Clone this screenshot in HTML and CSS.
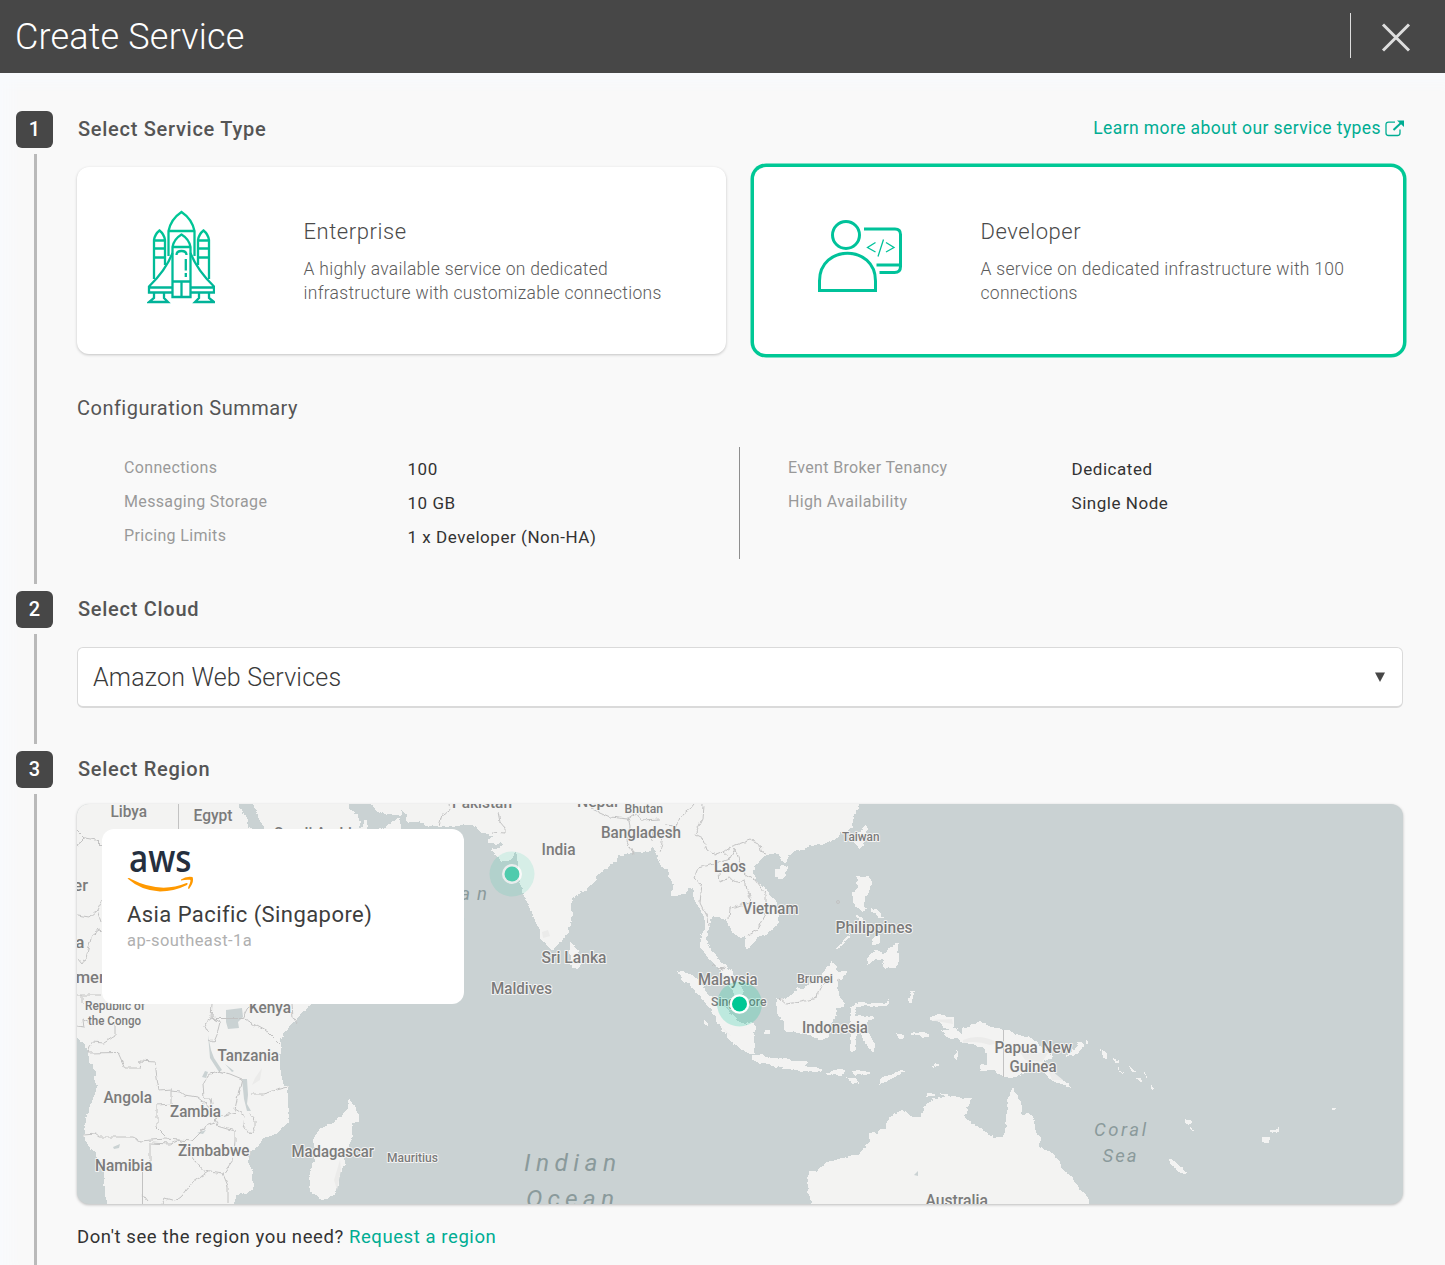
FILE: index.html
```html
<!DOCTYPE html>
<html lang="en">
<head>
<meta charset="utf-8">
<title>Create Service</title>
<link rel="stylesheet" href="styles.css">
</head>
<body>
<header class="topbar">
  <h1 class="title">Create Service</h1>
  <button class="close" aria-label="Close">
    <svg width="30" height="30" viewBox="0 0 30 30"><path d="M2 1.500 28 27.500M28 1.500 2 27.500" stroke="#dedede" stroke-width="3" fill="none"/></svg>
  </button>
</header>
<main class="steps">
  <section class="step step-type">
    <div class="rail"><span class="badge">1</span><i class="line"></i></div>
    <div class="body">
      <div class="head">
        <h2>Select Service Type</h2>
        <a class="learn" href="#"><span>Learn more about our service types</span>
          <svg width="19" height="17" viewBox="0 0 19 17" fill="none" stroke="#00ad93"><path d="M10 2.200H3.500Q1 2.200 1 4.700V13Q1 15.500 3.500 15.500H12.500Q15 15.500 15 13V9.500" stroke-width="1.300"/><path d="M8.500 10 16.500 2.500" stroke-width="2"/><path d="M12 .5H19V7Z" fill="#00ad93" stroke="none"/></svg>
        </a>
      </div>
      <div class="cards">
        <article class="card">
          <div class="art">
            <svg width="68" height="94" viewBox="147 210 68 94" fill="none" stroke="url(#g)" stroke-width="2.300">
              <defs><linearGradient id="g" gradientUnits="userSpaceOnUse" x1="0" y1="210" x2="0" y2="304"><stop offset="0" stop-color="#00c895"/><stop offset="1" stop-color="#00b299"/></linearGradient></defs>
              <path d="M168.500 256V231Q171 219 181.500 212Q192 219 194.500 231V256M168.500 231H194.500"/>
              <path d="M172.500 297V247Q174 239 181.500 234.500Q189 239 190.500 247V297ZM172.500 247H190.500M172.500 281.500H190.500M181.500 281.500V297"/>
              <path d="M154 279V240Q155 234 159.500 230.500Q164 234 165 240V265M154 240.500H165M154 248.500H165M154 257.500H165"/>
              <path d="M209 279V240Q208 234 203.500 230.500Q199 234 198 240V265M198 240.500H209M198 248.500H209M198 257.500H209"/>
              <path d="M172.500 253Q166 270 149 286.500V292.500H172.500M149 287.500H172.500M190.500 253Q197 270 214 286.500V292.500H190.500M214 287.500H190.500"/>
              <path d="M154 293V298L149 302H168L164 298V293M199 293V298L195 302H214L209 298V293"/>
              <path d="M176.500 255Q176.500 251 181.500 251Q186.500 251 186.500 255M185.800 259V270.500M185.800 273V277"/>
            </svg>
          </div>
          <div class="copy"><h3>Enterprise</h3><p>A highly available service on dedicated<br>infrastructure with customizable connections</p></div>
        </article>
        <article class="card selected">
          <div class="art">
            <svg width="86" height="74" viewBox="817 219 86 74" fill="none" stroke="#00c29a" stroke-width="3">
              <circle cx="846" cy="235" r="13.500"/>
              <path d="M819.500 290.500V281C819.500 244 875.500 244 875.500 281V290.500Z"/>
              <path d="M864 229H895Q900.500 229 900.500 234.500V266.500Q900.500 272.500 894.500 272.500H879.500M876.500 265H900"/>
              <path d="M875.500 242.500 867.500 247.500 875.500 252M886 242.500 894 247.500 886 252M883.500 239.500 878 256.500" stroke-width="1.300"/>
            </svg>
          </div>
          <div class="copy"><h3>Developer</h3><p>A service on dedicated infrastructure with 100<br>connections</p></div>
        </article>
      </div>
      <h3 class="summary-title">Configuration Summary</h3>
      <div class="summary">
        <dl>
          <dt>Connections</dt><dd>100</dd>
          <dt>Messaging Storage</dt><dd>10 GB</dd>
          <dt>Pricing Limits</dt><dd>1 x Developer (Non-HA)</dd>
        </dl>
        <dl>
          <dt>Event Broker Tenancy</dt><dd>Dedicated</dd>
          <dt>High Availability</dt><dd>Single Node</dd>
        </dl>
      </div>
    </div>
  </section>
  <section class="step step-cloud">
    <div class="rail"><span class="badge">2</span><i class="line"></i></div>
    <div class="body">
      <div class="head"><h2>Select Cloud</h2></div>
      <div class="select"><span>Amazon Web Services</span><svg width="10" height="10" viewBox="0 0 10 10"><path d="M0 .5H10L5 10Z" fill="#474747"/></svg></div>
    </div>
  </section>
  <section class="step step-region">
    <div class="rail"><span class="badge">3</span><i class="line"></i></div>
    <div class="body">
      <div class="head"><h2>Select Region</h2></div>
      <div class="map">
        <svg class="world" width="1326" height="400" viewBox="77 804 1326 400">
          <defs><filter id="coast" filterUnits="userSpaceOnUse" x="67" y="794" width="1346" height="420"><feTurbulence type="fractalNoise" baseFrequency=".16" numOctaves="2" seed="4" result="n"/><feDisplacementMap in="SourceGraphic" in2="n" scale="5" xChannelSelector="R" yChannelSelector="G"/></filter></defs>
          <g class="land" shape-rendering="crispEdges" filter="url(#coast)">
            <path d="M67 794H235L242 811 248 825 256 840 320 980 312 1004 302 1013 292 1022 287 1030 283 1034 280 1042 281 1050 279 1058 279 1070 283 1082 288 1087 287 1100 289 1113 287 1123 277 1133 263 1138 256 1147 250 1152 247 1158 248 1163 253 1173 252 1181 253 1188 246 1192 237 1195 232 1204V1214H107V1204L105 1187 103 1167 98 1157 93 1150 86 1141 84 1133 86 1124 87 1117 93 1100 98 1088 96 1080 95 1070 90 1062 89 1054 86 1045 77 1037 67 1030Z"/>
            <path d="M249 794H342L347 804 352 811 358 815 360 826 363 827 363 821 366 820 367 829 382 829 391 824 399 818 402 829 410 840 300 980 265 829 253 804Z"/>
            <path d="M360 794H864L859 804 855 813 852 820 851 828 846 831 840 833 836 839 827 843 817 844 807 848 797 851 788 855 786 862 783 862 780 854 767 853 761 859 757 862 754 868 752 872 755 880 760 885 769 893 775 900 777 908 777 917 776 925 773 928 764 934 758 937 753 943 747 948 745 937 737 935 733 933 730 926 727 920 720 918 718 915 712 915 709 927 706 940 709 946 712 953 717 958 722 963 728 968 732 973 740 983 744 999 737 997 730 987 725 976 718 967 708 957 702 948 700 940 703 931 706 923 702 910 697 905 695 897 692 887 688 890 682 895 678 896 672 895 674 888 672 880 667 870 661 865 657 855 653 847 650 850 640 852 630 853 618 855 616 861 611 864 607 868 599 874 594 881 587 888 578 894 571 900 572 909 571 917 568 933 562 940 552 950 549 947 545 943 541 938 540 929 533 917 529 905 523 893 520 880 518 860 516 848 512 858 505 860 500 860 492 849 500 848 504 842 488 842 488 839 495 836 482 833 477 828 472 824 437 827 420 823 408 822 406 815 402 810 400 815 383 813 375 808Z"/>
            <path d="M571 942 578 952 582 963 578 967 573 968 570 960ZM349 1099 354 1105 357 1114 358 1122 353 1123 351 1137 345 1157 340 1176 335 1193 328 1198 322 1199 312 1193 309 1173 315 1161 316 1152 314 1142 316 1133 323 1128 333 1123 342 1115 347 1110Z"/>
            <path d="M775 871 780 867 788 866 787 872 782 878 775 876ZM867 826 860 832 855 842 859 848 864 842ZM858 877 870 878 870 886 868 893 863 900 863 906 866 909 863 912 858 907 853 903 853 895 857 889ZM870 953 876 950 883 955 889 949 897 943 899 960 895 968 885 967 883 959 873 960 868 964ZM836 949 850 935 850 937 839 948ZM871 908 877 911 883 918 878 917ZM873 939 878 934 880 942 874 945ZM857 915 863 919 861 923Z"/>
            <path d="M777 998 780 1000 790 997 799 989 812 984 820 976 827 969 832 962 838 972 847 973 837 982 839 995 845 1005 837 1007 835 1017 829 1026 828 1037 820 1040 812 1036 807 1033 785 1031 784 1021 778 1015Z"/>
            <path d="M678 972 685 973 695 977 701 983 708 995 718 1003 727 1010 739 1021 750 1028 753 1035 753 1052 745 1052 739 1046 730 1040 723 1031 715 1017 708 1005 700 997 692 986 683 980ZM753 1055 760 1055 768 1057 775 1060 788 1058 793 1061 808 1062 804 1065 812 1067 822 1070 813 1072 800 1070 782 1068 767 1064 752 1060Z"/>
            <path d="M826 1072H830V1074H826ZM831 1072 838 1069 846 1072 842 1074 832 1074ZM853 1072 862 1071 870 1073 855 1075ZM847 1078 855 1079 859 1083 852 1082ZM880 1084 881 1078 890 1075 905 1071 892 1078ZM897 1034 904 1035 903 1037 898 1037ZM911 1034 923 1032 929 1035 928 1038 918 1035ZM908 1001 911 993 914 992 911 1002ZM765 1030H769V1032H765ZM747 1024 753 1022 756 1028 754 1032ZM926 1093 936 1093 934 1096 927 1096ZM704 1020 707 1023 706 1025Z"/>
            <path d="M888 1001 887 1005 877 1006 864 1005 857 1007 853 1016 872 1016 874 1018 864 1023 864 1029 872 1038 875 1045 873 1051 865 1044 861 1032 858 1027 855 1031 856 1048 854 1051 850 1050 852 1037 849 1030 851 1016 852 1007 857 1003 878 1004 884 1003Z"/>
            <path d="M930 1018 942 1014 947 1017 953 1017 954 1027 960 1035 963 1029 967 1028 972 1025 980 1022 990 1027 1003 1030 1010 1032 1018 1036 1030 1038 1043 1048 1052 1057 1043 1060 1047 1068 1057 1077 1065 1081 1070 1087 1053 1082 1042 1070 1030 1069 1020 1073 1017 1077 1003 1076 995 1070 980 1070 982 1066 987 1065 988 1055 982 1047 974 1044 963 1042 956 1037 948 1038 942 1030 952 1031 940 1023ZM1066 1055 1075 1050 1080 1042 1084 1044 1078 1053 1067 1056ZM1086 1040 1088 1041 1087 1044ZM1101 1051 1107 1056 1106 1059 1102 1055ZM1113 1059 1119 1061 1118 1063ZM1118 1068 1124 1073ZM1129 1066 1135 1071 1133 1071ZM1136 1078 1142 1079 1141 1081ZM1144 1072 1147 1077ZM1150 1085 1153 1088 1150 1087Z"/>
            <path d="M813 1214V1204L808 1190 808 1181 811 1172 817 1173 820 1168 827 1163 840 1159 857 1155 866 1148 870 1142 870 1134 874 1132 878 1135 880 1130 885 1129 887 1121 893 1115 903 1110 908 1114 912 1118 922 1117 924 1109 928 1103 933 1100 945 1098 941 1094 948 1095 959 1098 972 1098 970 1103 966 1108 967 1113 963 1117 971 1123 980 1128 988 1135 995 1138 1003 1137 1006 1129 1007 1115 1008 1100 1013 1089 1017 1094 1020 1105 1022 1114 1028 1115 1033 1119 1035 1130 1039 1137 1040 1147 1047 1151 1053 1155 1058 1160 1061 1168 1065 1173 1072 1177 1074 1183 1080 1190 1085 1194 1089 1198 1088 1204V1214Z"/>
            <path d="M1168 1158 1176 1163 1187 1173 1180 1171 1172 1165ZM1262 1138 1266 1137 1270 1138 1269 1142 1263 1142ZM1271 1131 1279 1128 1279 1130 1272 1133ZM1186 1120H1189V1123H1186ZM1333 1108H1334V1109H1333ZM1190 1127 1193 1130 1192 1130ZM938 1064 934 1068 936 1063ZM957 1050 956 1059 954 1058Z"/>
          </g>
          <g class="relief">
            <path d="M963 1040Q980 1033 998 1043L990 1045Q976 1040 963 1043ZM1020 1052 1048 1053 1042 1062 1025 1060ZM1047 1067 1063 1080 1052 1080ZM255 1078 262 1068 260 1080 252 1085ZM542 932 548 930 550 936 543 938ZM334 1180 340 1160 341 1170 337 1190ZM930 1020 952 1019 953 1024ZM720 1025 732 1037 727 1033Z"/>
          </g>
          <g class="lake"><path d="M226 1010 242 1008 243 1017 238 1022 239 1028 228 1029 226 1022ZM208 1035 211 1050 214 1058 222 1070 219 1072 210 1058ZM242 1079 247 1079 248 1095 247 1104 251 1111 247 1111 244 1099ZM225 1064 234 1071 232 1072ZM202 1077 205 1071 208 1072 206 1078ZM113 1147 120 1144 119 1148 114 1149ZM197 1133 206 1130 203 1134ZM914 1175 918 1171 918 1176Z"/></g>
          <g class="borders">
            <path d="M178.500 804V829M1003.500 1030V1077M142.500 1172V1204"/>
            <path filter="url(#coast)" d="M77 830 85 838 80 843 77 845M85 838 96 840 102 846M77 915 89 917 97 910 102 900M97 910 101 922M77 958 82 964 86 958 92 935 99 930 102 931M77 995 102 995M82 995V1004M77 1027 84 1028 83 1020 95 1025 105 1020M88 1053 118 1052.500 125 1068 139 1068 140 1061 155 1062 157 1078 159 1090 172 1089 172 1104 157 1105 157 1128 167 1138M172 1091 180 1092 184 1095 192 1096 197 1097 206 1104 209 1108 212 1104 211 1098 204 1098 203 1085 208 1075M88 1053 92 1042 104 1043 115 1036 115 1022M212 1004 211 1018 216 1020M208 1031 205 1024 213 1018 220 1022 218 1030 213 1042 209 1040M215 1018.500H243L248 1008 252 1004M243 1018.500 268 1032 280 1044M292 1004 293 1018 297 1023M219 1071 230 1074 242 1079 238 1095 235 1109 245 1115 244 1125 250 1134 255 1128 255 1120 248 1112M208 1075 220 1071M250 1094 263 1094 273 1091 288 1087M215 1118 236 1112M215 1118 218 1126 235 1131 235 1142 233 1160 223 1174M215 1123 205 1126 200 1133 192 1141 180 1140M84 1135 95 1134 99 1137 132 1137 140 1141 165 1139 180 1140 170 1144 150 1143V1165M180 1140 195 1160 204 1171 223 1174 228 1186 228 1204M208 1172 193 1182 182 1196 175 1201 165 1198 162 1204M142 1194 148 1202"/>
            <path filter="url(#coast)" d="M439 825 442 815 450 810 449 804M498 812 500 822 505 828 505 834 492 833M592 809 610 817 628 819 638 812 641 820 660 819M628 817 630 826 627 840 634 855M652 841 655 829 663 838 660 852M703 804 702 820 695 834 703 838 707 850 715 855 723 852 730 847 750 840 760 845 761 851 767 853M676 826 679 817 690 809 694 804M677 826 664 825M723 852 730 858 735 849 740 862 745 869M730 858 716 863 698 868 694 878 702 885 700 902 708 918 709 926M719 873 720 882 729 878 737 882 745 880 747 889 751 897 750 903 730 908 729 920M742 872 755 880 766 895 766 914 757 930 748 935M712 964 717 969 726 968 719 971M779 998 786 1004 800 1002 817 998 818 993 822 985 831 979M837 981 840 979"/>
            <circle cx="838" cy="902" r="1.500"/>
          </g>
          <g class="label" lengthAdjust="spacingAndGlyphs">
            <text x="110.500" y="816.500" textLength="36.500" lengthAdjust="spacingAndGlyphs">Libya</text><text x="193.500" y="820.500" textLength="39" lengthAdjust="spacingAndGlyphs">Egypt</text>
            <text x="274" y="838.500" textLength="86" lengthAdjust="spacingAndGlyphs">Saudi Arabia</text><text x="452" y="807.500" textLength="60" lengthAdjust="spacingAndGlyphs">Pakistan</text><text x="577" y="807" textLength="41" lengthAdjust="spacingAndGlyphs">Nepal</text>
            <text class="s" x="624.500" y="812.500" textLength="38.500" lengthAdjust="spacingAndGlyphs">Bhutan</text><text x="601" y="838" textLength="80" lengthAdjust="spacingAndGlyphs">Bangladesh</text>
            <text x="541.500" y="854.500" textLength="34" lengthAdjust="spacingAndGlyphs">India</text><text class="s" x="842" y="841" textLength="37.500" lengthAdjust="spacingAndGlyphs">Taiwan</text>
            <text x="714" y="872" textLength="32" lengthAdjust="spacingAndGlyphs">Laos</text><text x="742.500" y="914" textLength="56" lengthAdjust="spacingAndGlyphs">Vietnam</text><text x="835.500" y="932.500" textLength="77" lengthAdjust="spacingAndGlyphs">Philippines</text>
            <text x="541.500" y="962.500" textLength="65" lengthAdjust="spacingAndGlyphs">Sri Lanka</text><text x="491" y="994" textLength="61" lengthAdjust="spacingAndGlyphs">Maldives</text>
            <text x="698" y="985" textLength="59.500" lengthAdjust="spacingAndGlyphs">Malaysia</text><text class="s" x="797" y="983" textLength="36" lengthAdjust="spacingAndGlyphs">Brunei</text><text class="s" x="711" y="1005.500" textLength="55.500" lengthAdjust="spacingAndGlyphs">Singapore</text>
            <text x="802" y="1033" textLength="66" lengthAdjust="spacingAndGlyphs">Indonesia</text><text x="994.500" y="1053" textLength="77.500" lengthAdjust="spacingAndGlyphs">Papua New</text><text x="1009.500" y="1072" textLength="47" lengthAdjust="spacingAndGlyphs">Guinea</text>
            <text x="64" y="890.500">ger</text><text x="75.500" y="948">a</text><text x="56" y="982.500">Cameroon</text>
            <text class="s" x="85" y="1010" textLength="60" lengthAdjust="spacingAndGlyphs">Republic of</text><text class="s" x="88" y="1025" textLength="53" lengthAdjust="spacingAndGlyphs">the Congo</text>
            <text x="249" y="1013" textLength="42" lengthAdjust="spacingAndGlyphs">Kenya</text><text x="217.500" y="1061" textLength="61.500" lengthAdjust="spacingAndGlyphs">Tanzania</text><text x="103.500" y="1103" textLength="48.500" lengthAdjust="spacingAndGlyphs">Angola</text>
            <text x="170" y="1117" textLength="51" lengthAdjust="spacingAndGlyphs">Zambia</text><text x="178" y="1155.500" textLength="71.500" lengthAdjust="spacingAndGlyphs">Zimbabwe</text><text x="95" y="1171" textLength="57.500" lengthAdjust="spacingAndGlyphs">Namibia</text>
            <text x="291.500" y="1157" textLength="82.500" lengthAdjust="spacingAndGlyphs">Madagascar</text><text class="s" x="387" y="1162" textLength="51" lengthAdjust="spacingAndGlyphs">Mauritius</text><text x="925.500" y="1206" textLength="62.500" lengthAdjust="spacingAndGlyphs">Australia</text>
          </g>
          <g class="sea">
            <text class="ocean" x="524" y="1171" textLength="92">Indian</text><text class="ocean" x="526" y="1207" textLength="88">Ocean</text>
            <text x="1094" y="1135.500" textLength="52">Coral</text><text x="1102.500" y="1162" textLength="34">Sea</text>
            <text x="432" y="899.500" textLength="55">bian</text><text x="455" y="926">a</text>
          </g>
          <g class="pins">
            <g opacity=".6"><circle cx="512" cy="874" r="22.500" fill="#00c895" opacity=".2"/><circle cx="512" cy="874" r="10" fill="#fff"/><circle cx="512" cy="874" r="7.500" fill="#00c895"/></g>
            <circle cx="739.500" cy="1004" r="22.500" fill="#00c895" opacity=".22"/><circle cx="739.500" cy="1004" r="9.800" fill="#fff"/><circle cx="739.500" cy="1004" r="7.500" fill="#00c895"/>
          </g>
        </svg>
        <aside class="region">
          <svg class="logo" width="67" height="44" viewBox="127 848 67 44" fill="#ff9900"><text class="logo-word" x="129" y="872" textLength="62.500" lengthAdjust="spacingAndGlyphs">aws</text><path d="M127.500 878.500Q129 877.500 131 879Q160 894 186.500 883Q188.500 882.500 187 885Q174 891.500 160 891.500Q141 890.500 127.500 878.500Z"/><path d="M181 879.500Q186 876 192.500 877Q194.500 882 189 889Q187.500 889 188.500 886.500Q191.500 880.500 190 879.800Q186 879.300 181 880.500Z"/></svg>
          <div class="region-name">Asia Pacific (Singapore)</div>
          <div class="region-id">ap-southeast-1a</div>
        </aside>
      </div>
      <p class="hint">Don't see the region you need? <a href="#">Request a region</a></p>
    </div>
  </section>
</main>
</body>
</html>
```
FILE: styles.css
```css
* { box-sizing: border-box; margin: 0; padding: 0; }
body { font-family: Roboto, "Liberation Sans", sans-serif; background: #f9f9f9; color: #3d3d3d; height: 1265px; overflow: hidden; }
a { text-decoration: none; color: #00ad93; }
svg { display: block; flex: none; }
.topbar { height: 73px; background: #474747; display: flex; justify-content: space-between; align-items: flex-start; padding: 13px 34px 0 15px; }
.title { font-weight: 300; font-size: 36px; line-height: 48px; color: #fff; letter-spacing: .18px; }
.close { display: flex; align-items: center; height: 45px; padding: 4px 0 0 30px; border: 0; border-left: 1px solid #dedede; background: none; }
.steps { display: flex; flex-direction: column; height: 1192px; padding: 38px 42px 0 16px; overflow: hidden; box-shadow: inset 0 20px 14px -10px #f8fafd, inset 20px 0 14px -10px #f8fafd; }
.step { display: flex; gap: 24px; flex: none; }
.step-type { height: 480px; }
.step-cloud { height: 160px; }
.step-region { height: 560px; }
.rail { width: 37px; display: flex; flex-direction: column; align-items: center; gap: 6px; padding-bottom: 7px; }
.badge { width: 37px; height: 37px; border-radius: 6px; background: #474747; color: #fff; font-size: 20px; font-weight: 500; line-height: 37px; text-align: center; }
.line { width: 3px; flex: 1; margin-left: 1px; background: #bababa; }
.body { flex: 1; min-width: 0; }
.head { display: flex; justify-content: space-between; align-items: center; height: 37px; padding: 0 0 1px 1px; }
h2 { font-size: 20px; font-weight: 500; line-height: 24px; color: #555; letter-spacing: .72px; }
.learn { display: flex; align-items: center; gap: 4px; font-size: 17.500px; line-height: 22px; letter-spacing: .41px; margin: -2px -1px 0 0; }
.cards { display: flex; gap: 28px; margin-top: 19px; }
.card { flex: 1; height: 187px; background: #fff; border-radius: 12px; box-shadow: 0 1px 3px rgba(0,0,0,.22); display: flex; align-items: flex-start; }
.card.selected { box-shadow: 0 0 0 3.5px #00c895; }
.art { width: 226.500px; display: flex; padding: 43px 0 0 70px; }
.selected .art { padding: 52px 0 0 63px; }
.copy { padding-top: 51px; white-space: nowrap; }
.copy h3 { font-size: 22px; font-weight: 300; line-height: 28px; color: #4a4a4a; letter-spacing: .55px; }
.copy p { font-size: 17.500px; font-weight: 300; line-height: 24px; color: #5c5c5c; margin-top: 11px; letter-spacing: .29px; }
.summary-title { font-size: 20px; font-weight: 400; line-height: 24px; color: #555; margin-top: 42px; letter-spacing: .48px; }
.summary { display: grid; grid-template-columns: 663px 663px; height: 112px; margin-top: 27px; }
.summary dl { display: grid; grid-template-columns: 283.500px auto; grid-auto-rows: 34px; padding: 4px 0 0 47px; }
.summary dl + dl { border-left: 1px solid #8e8e8e; margin-left: -1px; padding-left: 48px; }
dt { font-size: 16px; line-height: 34px; color: #999; letter-spacing: .35px; }
dd { font-size: 17px; line-height: 36px; color: #333; letter-spacing: .54px; }
.select { height: 61px; margin-top: 19px; display: flex; align-items: center; justify-content: space-between; padding: 0 17px 0 15px; background: #fff; border: 1px solid #dadada; border-bottom-width: 2px; border-radius: 6px; font-size: 25px; font-weight: 300; color: #3a3a3a; letter-spacing: .2px; }
.map { position: relative; height: 400px; margin-top: 16px; border-radius: 12px; background: #cad2d3; box-shadow: 0 1px 3px rgba(0,0,0,.25); }
.world { border-radius: 12px; }
.land path { fill: #f3f3f2; stroke: #f3f3f2; stroke-width: 1px; }
.relief path { fill: #ebebea; }
.lake path { fill: #cad2d3; }
.borders { fill: none; stroke: #c2c2c2; stroke-width: 1; }
.label { font-family: Roboto, sans-serif; font-size: 16.500px; font-weight: 500; fill: #7b7b7b; stroke: #f4f4f3; stroke-width: 2px; paint-order: stroke; stroke-linejoin: round; }
.label .s { font-size: 13px; }
.sea { font-family: Roboto, sans-serif; font-size: 18.500px; font-style: italic; fill: #8a9a9b; }
.sea .ocean { font-size: 24.500px; }
.region { position: absolute; left: 25px; top: 25px; width: 362px; height: 175px; padding: 19px 25px; border-radius: 12px; background: #fff; }
.logo-word { font-family: "Open Sans", sans-serif; font-weight: 600; font-size: 37px; fill: #252f3e; }
.region-name { font-size: 22px; line-height: 28px; margin-top: 9px; color: #3d3d3d; letter-spacing: .43px; }
.region-id { font-size: 16.500px; line-height: 24px; color: #b0b0b0; letter-spacing: .42px; }
.hint { font-size: 18.500px; line-height: 24px; margin-top: 21px; color: #333; white-space: nowrap; letter-spacing: .58px; }
```
